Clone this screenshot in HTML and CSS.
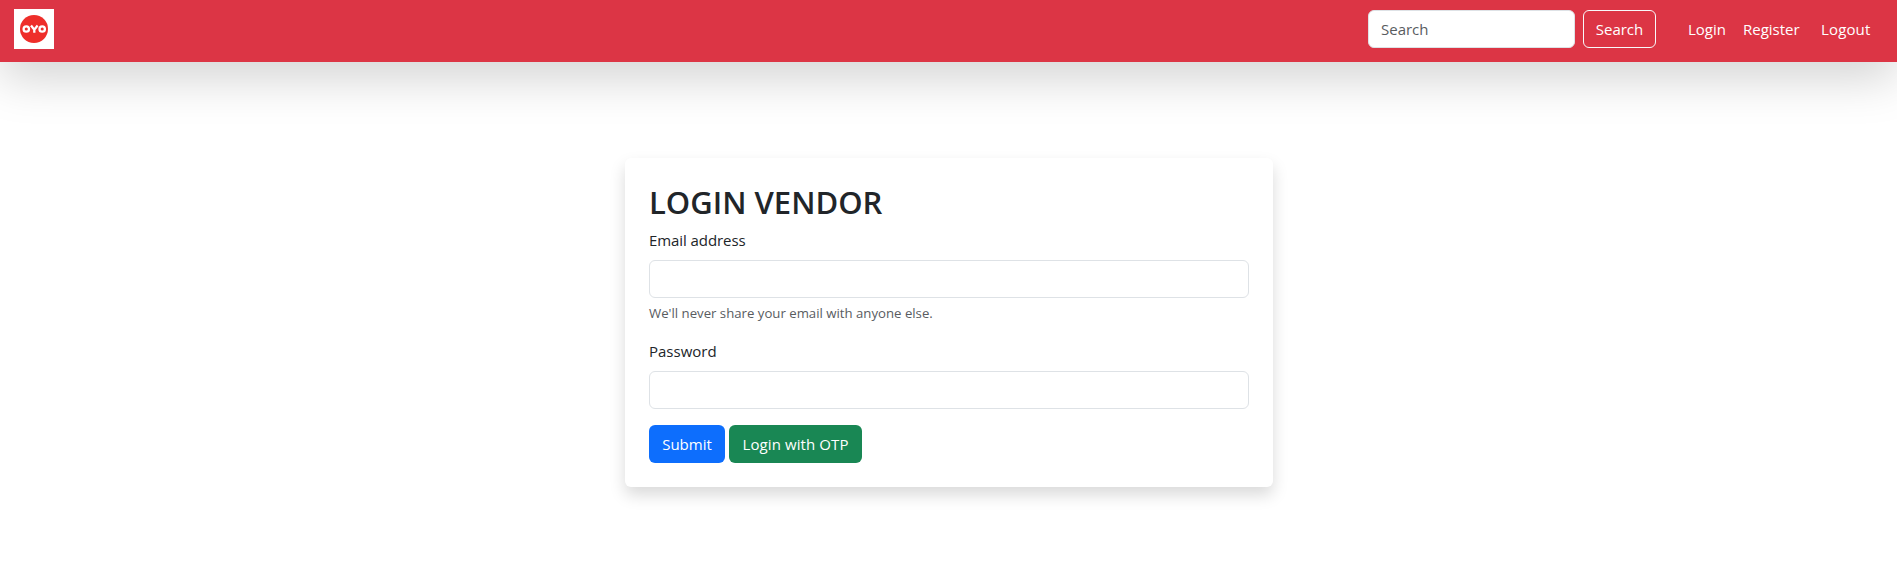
FILE: index.html
```html
<!DOCTYPE html>
<html lang="en">
<head>
<meta charset="utf-8">
<title>Login Vendor</title>
<link rel="stylesheet" href="styles.css">
</head>
<body>
<nav class="navbar">
  <a class="brand" href="#" aria-label="OYO">
    <svg width="40" height="40" viewBox="0 0 40 40">
      <rect width="40" height="40" fill="#fff"/>
      <circle cx="20" cy="20" r="14" fill="#ee2e2a"/>
      <g fill="none" stroke="#fff" stroke-width="2.3">
        <circle cx="12.3" cy="20" r="2.7"/>
        <circle cx="28.2" cy="20" r="2.7"/>
        <path d="M17 16.5l3.3 4.2 3.3-4.2M20.3 20v3.8"/>
      </g>
    </svg>
  </a>
  <form class="search">
    <input class="control search-input" type="search" placeholder="Search">
    <button class="btn btn-outline" type="button">Search</button>
  </form>
  <div class="links">
    <a class="link login" href="#">Login</a>
    <a class="link register" href="#">Register</a>
    <a class="link logout" href="#">Logout</a>
  </div>
</nav>
<main class="card">
  <h2 class="title">LOGIN VENDOR</h2>
  <form>
    <div class="field">
      <label class="label email-label" for="email">Email address</label>
      <input class="control" id="email" type="email">
      <div class="help">We'll never share your email with anyone else.</div>
    </div>
    <div class="field">
      <label class="label" for="password">Password</label>
      <input class="control" id="password" type="password">
    </div>
    <div class="actions">
      <button class="btn btn-primary" type="button">Submit</button>
      <button class="btn btn-success" type="button">Login with OTP</button>
    </div>
  </form>
</main>
</body>
</html>
```
FILE: styles.css
```css
* { box-sizing: border-box; }
body {
  min-height: 100vh;
  margin: 0;
  background: #fff;
  color: #212529;
  font: 15px/24px "Segoe UI", "Open Sans", "Noto Sans", sans-serif;
}
.navbar {
  display: flex;
  align-items: flex-start;
  height: 62px;
  padding: 9px 26px 0 14px;
  background: #dc3545;
  box-shadow: 0 16px 48px rgba(0, 0, 0, .175);
}
.brand, .brand svg { display: block; }
.search {
  display: flex;
  gap: 8px;
  margin: 1px 32px 0 auto;
}
.control {
  display: block;
  width: 100%;
  height: 38px;
  padding: 6px 12px;
  border: 1px solid #dee2e6;
  border-radius: 6px;
  background: #fff;
  color: #212529;
  font: inherit;
}
.control::placeholder { color: #595c5f; opacity: 1; }
.search-input { width: 207px; }
.btn {
  height: 38px;
  padding: 0;
  border: 1px solid transparent;
  border-radius: 6px;
  color: #fff;
  font: inherit;
  white-space: nowrap;
}
.btn-outline { width: 73px; border-color: #f8f9fa; background: transparent; }
.links { display: flex; padding-top: 8px; }
.link { color: #fff; text-decoration: none; white-space: nowrap; }
.login { width: 55px; }
.register { width: 78px; }
.logout { width: 50px; letter-spacing: .15px; }
.card {
  width: 648px;
  height: 329px;
  margin: 96px auto 0 625px;
  padding: 24px;
  border-radius: 6px;
  background: #fff;
  box-shadow: 0 8px 16px rgba(0, 0, 0, .15);
}
.title { margin: 0 0 7px; padding-top: 1px; font-size: 31px; font-weight: 600; line-height: 38.4px; }
.field { margin-bottom: 16px; }
.label { display: block; width: max-content; margin-bottom: 8px; }
.email-label { letter-spacing: -.08px; }
.help { padding-top: 1px; margin-top: 4px; color: #595c5f; font-size: 13.2px; line-height: 20px; }
.actions { display: flex; gap: 4px; }
.btn-primary { width: 76px; background: #0d6efd; }
.btn-success { width: 133px; background: #198754; letter-spacing: .1px; }
```
